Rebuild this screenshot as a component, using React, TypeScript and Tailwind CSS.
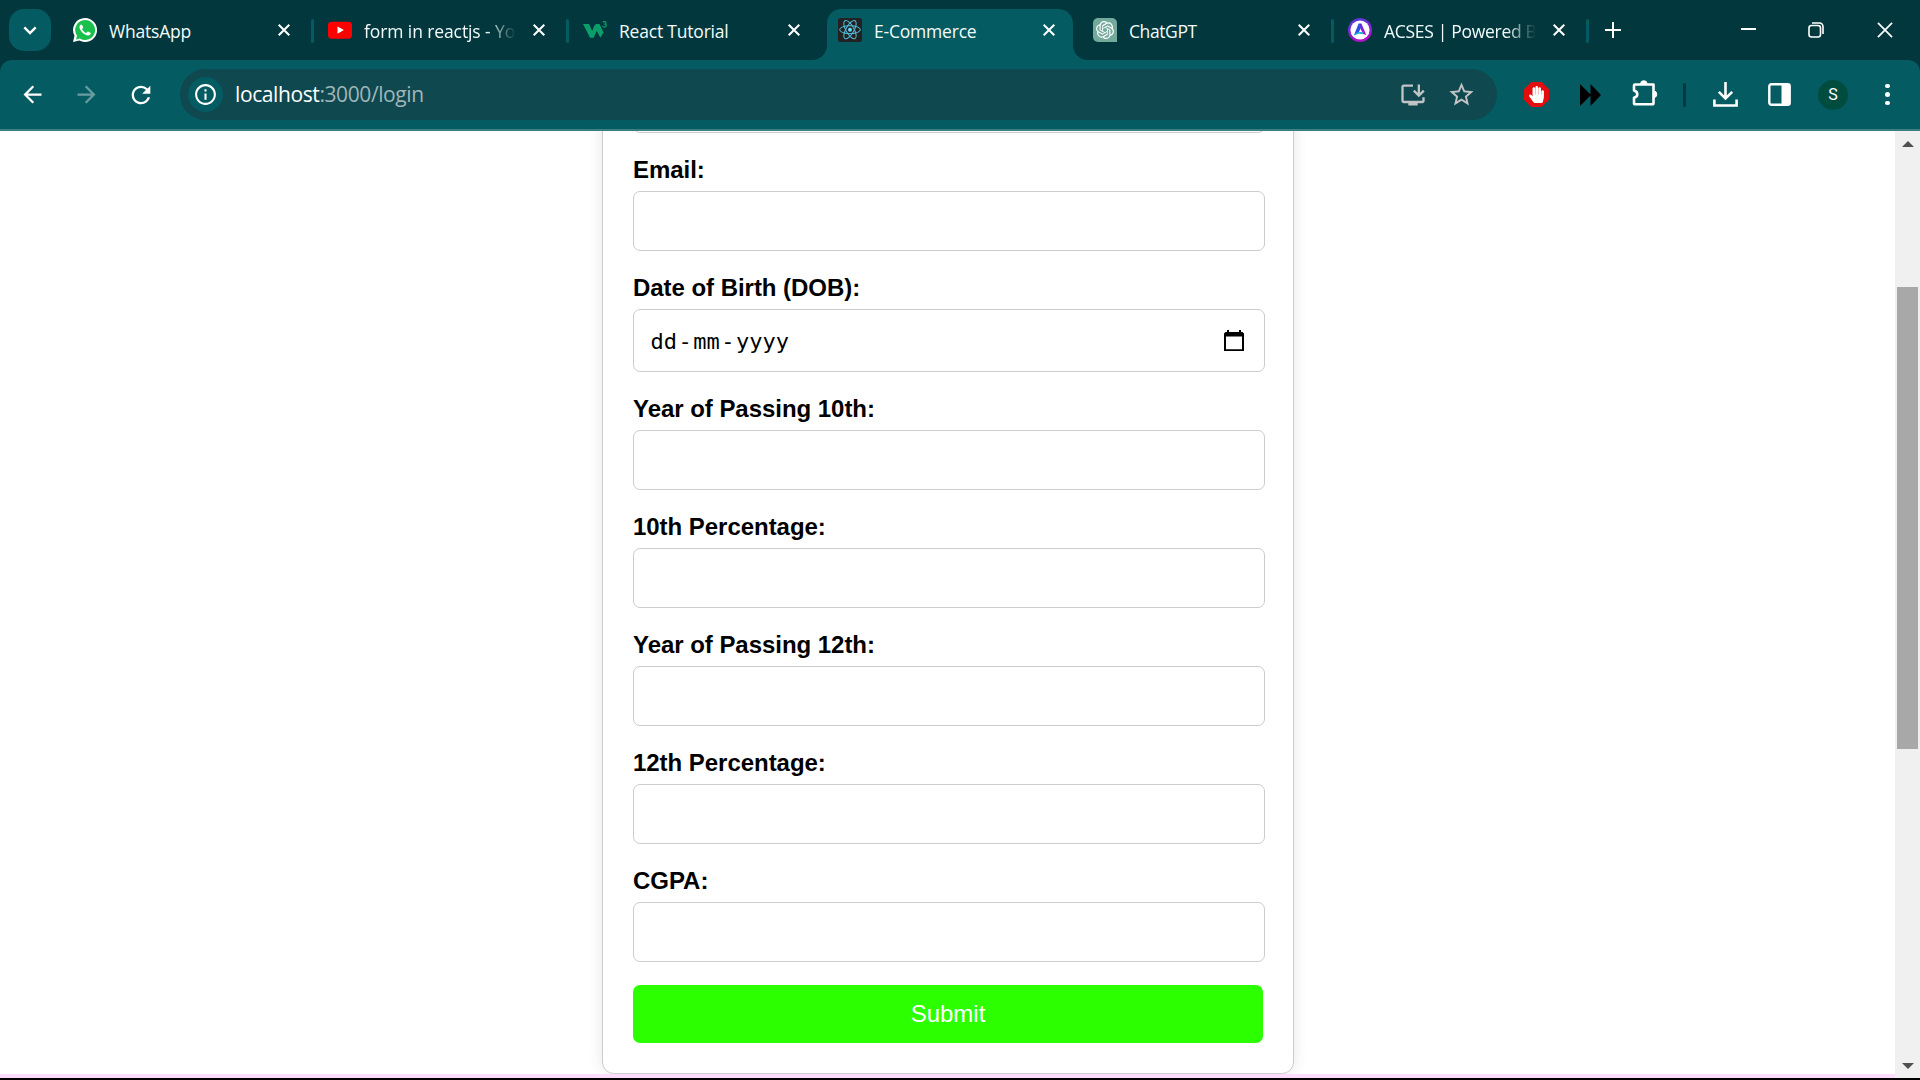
import React from "react";
import {
  MdArrowBack,
  MdArrowForward,
  MdRefresh,
  MdOutlineInfo,
  MdOutlineInstallDesktop,
  MdStarBorder,
} from "react-icons/md";
import { SiOpenai } from "react-icons/si";
import { FaHandPaper } from "react-icons/fa";

function WhatsAppIcon() {
  return (
    <svg width="24" height="24" viewBox="0 0 24 24">
      <path d="M12 0a12 12 0 1 1-5.600 22.600L0 24l1.500-6.200A12 12 0 0 1 12 0z" fill="#fff" />
      <path d="M12 2a10 10 0 1 1-5.200 18.500L3 21.400l1-3.700A10 10 0 0 1 12 2z" fill="#19c14c" />
      <path
        d="M8.300 6.500c-.9 0-1.800 1.200-1.800 2.600 0 3.800 5 8.400 8.600 8.400 1.400 0 2.700-1 2.700-2.400 0-.5-2.300-1.700-2.900-1.700-.6 0-1.100 1.500-1.700 1.500-.9 0-4-2.800-4-3.700 0-.5 1-1 1-1.600 0-.5-.9-3.100-1.900-3.100z"
        fill="#fff"
      />
    </svg>
  );
}

function YouTubeIcon() {
  return (
    <svg width="24" height="24" viewBox="0 0 24 24">
      <rect x="0" y="3.700" width="24" height="17" rx="3.600" fill="#f00" />
      <path d="M9.500 8.400l6.400 3.700-6.400 3.700z" fill="#fff" />
    </svg>
  );
}

function W3Icon() {
  return (
    <svg width="24" height="24" viewBox="0 0 24 24" fill="none">
      <path d="M0 6h6l3.200 7L11.400 7.500 13.200 6h3.300l4 8.500-3.200 5.200-3.600-6.900-3 6.900H7z" fill="#0a9e6b" />
      <path
        d="M19.800 4.500c.6-1.300 3.300-1.100 3.200.4 0 1-.9 1.200-1.700 1.200 1 0 2 .4 2 1.500 0 1.900-3.100 1.900-3.700.4"
        stroke="#0a9e6b"
        strokeWidth="1.200"
      />
    </svg>
  );
}

function ReactIcon() {
  return (
    <svg width="24" height="24" viewBox="0 0 24 24" fill="none">
      <rect width="24" height="24" rx="2.500" fill="#222" />
      <g stroke="#53c1de" strokeWidth="1">
        <ellipse cx="12" cy="11.700" rx="10.300" ry="4" />
        <ellipse cx="12" cy="11.700" rx="10.300" ry="4" transform="rotate(60 12 11.700)" />
        <ellipse cx="12" cy="11.700" rx="10.300" ry="4" transform="rotate(120 12 11.700)" />
      </g>
      <circle cx="12" cy="11.700" r="2" fill="#61dafb" />
    </svg>
  );
}

function ChatGptIcon() {
  return (
    <span className="flex size-6 items-center justify-center rounded-[5px] rounded-br-none bg-[#74aa9c]">
      <SiOpenai size={18} color="#fff" />
    </span>
  );
}

function AcsesIcon() {
  return (
    <svg width="24" height="24" viewBox="0 0 24 24">
      <defs>
        <linearGradient id="ring" x1="0" y1="0" x2="0.300" y2="1">
          <stop offset="0" stopColor="#4a3fd8" />
          <stop offset="1" stopColor="#b012c8" />
        </linearGradient>
        <linearGradient id="leg" x1="0" y1="0" x2="0" y2="1">
          <stop offset="0" stopColor="#5a2be0" />
          <stop offset="1" stopColor="#c010d0" />
        </linearGradient>
      </defs>
      <circle cx="12" cy="12" r="12" fill="url(#ring)" />
      <circle cx="12" cy="12" r="9.600" fill="#fff" />
      <path d="M10.600 5.500h2.800L18.300 17l-3.300-1L12 9.500z" fill="url(#leg)" />
      <path d="M10.600 5.500l2.200 4.500-2.300 5-4.500 2.200z" fill="#2a50e0" />
      <path d="M6 17.300c1.500-2.800 5.500-4 8.500-3l1 2c-3.500-1-6-.6-9.500 1z" fill="#12b8d0" />
    </svg>
  );
}

function CloseGlyph({ size = 12, width = 2 }: { size?: number; width?: number }) {
  return (
    <svg width={size} height={size} viewBox="0 0 12 12" stroke="#fff" strokeWidth={width} fill="none">
      <path d="M.7.7l10.600 10.600M11.300.7L.7 11.300" />
    </svg>
  );
}

type TabInfo = {
  title: string;
  icon: React.ReactNode;
  sep?: boolean;
  active?: boolean;
  fade?: boolean;
  tracking: string;
};

const tabs: TabInfo[] = [
  { title: "WhatsApp", icon: <WhatsAppIcon />, tracking: "tracking-[-0.2px]" },
  { title: "form in reactjs - Yo", icon: <YouTubeIcon />, sep: true, fade: true, tracking: "tracking-[-0.1px]" },
  { title: "React Tutorial", icon: <W3Icon />, sep: true, tracking: "tracking-[-0.2px]" },
  { title: "E-Commerce", icon: <ReactIcon />, active: true, tracking: "tracking-[-0.2px]" },
  { title: "ChatGPT", icon: <ChatGptIcon />, tracking: "tracking-[-0.4px]" },
  { title: "ACSES | Powered B", icon: <AcsesIcon />, sep: true, fade: true, tracking: "tracking-[-0.3px]" },
];

function Tab({ title, icon, sep, active, fade, tracking }: TabInfo) {
  return (
    <div className="relative isolate flex h-[60px] w-[255px] items-center">
      {active && (
        <svg className="absolute top-[9px] left-[-9px] -z-10" width="276" height="51" viewBox="0 0 276 51">
          <path
            d="M0 51C9 51 15 44 15 36V15C15 6 21 0 30 0H246C255 0 261 6 261 15V36C261 44 267 51 276 51Z"
            fill="#045b62"
          />
        </svg>
      )}
      <span className={`mt-0.5 h-6 w-[3px] rounded-full ${sep ? "bg-[#045b62]" : ""}`} />
      <span className="ml-[14px] size-6">{icon}</span>
      <span
        className={`mt-0.5 ml-3 w-[151px] text-[17.5px] leading-6 whitespace-nowrap text-[#f2fbfb] ${tracking} ${
          fade ? "[mask-image:linear-gradient(to_right,#000_122px,transparent_152px)]" : ""
        }`}
      >
        {title}
      </span>
      <span className="ml-[18px]">
        <CloseGlyph />
      </span>
    </div>
  );
}

function TabStrip() {
  return (
    <div className="flex h-[60px] items-center bg-[#02383d]">
      <button className="ml-[9px] flex h-[42px] w-[42px] items-center justify-center rounded-[15px] bg-[#045b62]">
        <svg width="14" height="9" viewBox="0 0 14 9" fill="none" stroke="#fff" strokeWidth="2.400">
          <path d="M1.300 1.300L7 7l5.700-5.700" />
        </svg>
      </button>
      <div className="ml-[5px] flex">
        {tabs.map((t) => (
          <Tab key={t.title} {...t} />
        ))}
      </div>
      <span className="mt-0.5 h-6 w-[3px] rounded-full bg-[#045b62]" />
      <svg className="ml-4" width="16" height="16" viewBox="0 0 16 16" stroke="#fff" strokeWidth="2">
        <path d="M8 0v16M0 8h16" />
      </svg>
      <span className="-mt-0.5 ml-[120px] h-0.5 w-[15px] bg-white" />
      <svg className="ml-[52px]" width="16" height="16" viewBox="0 0 16 16" fill="none" stroke="#fff" strokeWidth="1.600">
        <rect x="1" y="3.500" width="11.500" height="11.500" rx="2.500" />
        <path d="M4 1h7.500a3.500 3.500 0 0 1 3.500 3.500V12" />
      </svg>
      <span className="ml-[53px]">
        <CloseGlyph size={16} width={1.3} />
      </span>
    </div>
  );
}

function Toolbar() {
  return (
    <div className="bg-[#02383d]">
      <div className="flex h-[71px] items-center rounded-t-xl border-b-2 border-[#3a7f84] bg-[#045b62] text-white">
        <MdArrowBack size={27} className="ml-[19px]" />
        <MdArrowForward size={27} className="ml-[27px] opacity-40" />
        <MdRefresh size={28} className="ml-[27px]" />
        <div className="ml-[25px] flex h-[51px] w-[1317px] items-center rounded-full bg-[#0f484f]">
          <span className="ml-2 flex size-[35px] items-center justify-center rounded-full bg-[#045b62]">
            <MdOutlineInfo size={25} />
          </span>
          <span className="ml-3 text-[21px] tracking-[-0.4px] whitespace-nowrap">
            localhost<span className="text-[#9fb6b9]">:3000/login</span>
          </span>
          <span className="ml-auto flex items-center text-[#c1c4c5]">
            <MdOutlineInstallDesktop size={28} />
            <MdStarBorder size={29} className="mr-[21px] ml-5" />
          </span>
        </div>
        <span className="relative ml-[27px] flex size-[25px] items-center justify-center">
          <svg className="absolute inset-0" width="25" height="25" viewBox="0 0 25 25">
            <path d="M7.300 0h10.400L25 7.300v10.400L17.700 25H7.300L0 17.700V7.300z" fill="#e40d0d" />
          </svg>
          <FaHandPaper size={17} className="relative" />
        </span>
        <svg className="ml-[31px]" width="21" height="24" viewBox="0 0 21 24">
          <path d="M0 1l10.500 10.500V1L21 12 10.500 23V12.500L0 23z" fill="#000" />
        </svg>
        <svg className="-mt-[3px] ml-[31px]" width="26" height="26" viewBox="0 0 26 26">
          <path
            d="M3 4.500h18.500V23q0 1.300-1.300 1.300H3.300Q2 24.300 2 23v-5.200q3.300-1 3.300-3.600T2 10.600V5.500q0-1 1-1z"
            fill="none"
            stroke="#fff"
            strokeWidth="2.600"
            strokeLinejoin="round"
          />
          <path d="M8.500 4a3.300 3.300 0 0 1 6.600 0zM21.500 11a3.300 3.300 0 0 1 0 6.600z" fill="#fff" stroke="#fff" />
        </svg>
        <span className="ml-[25px] h-6 w-[3px] rounded-full bg-[#02383d]" />
        <svg className="ml-[27px]" width="25" height="25" viewBox="0 0 25 25" fill="none" stroke="#fff" strokeWidth="2.600">
          <path d="M12.500 0v16M5.800 9.800l6.700 6.700 6.700-6.700M1.400 17.500v6h22.200v-6" />
        </svg>
        <svg className="ml-[30px]" width="23" height="23" viewBox="0 0 23 23">
          <rect x="1.300" y="1.300" width="20.400" height="20.400" rx="2" fill="none" stroke="#fff" strokeWidth="2.400" />
          <path d="M13.500 1h8v21h-8z" fill="#fff" />
        </svg>
        <span className="ml-[27px] flex size-[30px] items-center justify-center rounded-full bg-[#004d40] font-[Roboto] text-[16px] leading-none">
          S
        </span>
        <span className="ml-[37px] flex flex-col gap-1">
          <span className="size-[4.500px] rounded-full bg-white" />
          <span className="size-[4.500px] rounded-full bg-white" />
          <span className="size-[4.500px] rounded-full bg-white" />
        </span>
      </div>
    </div>
  );
}

function Field({ label, children }: { label: string; children?: React.ReactNode }) {
  return (
    <div className="flex flex-col">
      <label className="mt-[22px] mb-[7px] text-[24px] leading-[29px] font-bold tracking-[-0.04px]">{label}</label>
      {children ?? <input className="h-[60px] w-[632px] rounded-[7px] border border-[#ccc] px-4 text-2xl outline-none" />}
    </div>
  );
}

function DateInput() {
  return (
    <div className="flex h-[63px] w-[632px] items-center rounded-[7px] border border-[#ccc] pr-5 pl-[15px]">
      <span className="mt-0.5 flex font-['DejaVu_Sans_Mono'] text-[22px]">
        <span className="px-[1.500px]">dd</span>-<span className="px-[1.500px]">mm</span>-
        <span className="px-[1.500px]">yyyy</span>
      </span>
      <svg className="ml-auto" width="20" height="21" viewBox="0 0 20 21">
        <path d="M1.500 2H3V0h2v2h10V0h2v2h1.500L20 3.500V21H0V3.500zM2 6.500V19.200h16V6.500z" fill="#000" fillRule="evenodd" />
      </svg>
    </div>
  );
}

function Page() {
  return (
    <div className="flex h-[947px]">
      <div className="flex h-[943px] flex-1 flex-col items-center overflow-hidden bg-white">
        <form className="-mt-5 mr-[-1px] flex w-[692px] shrink-0 flex-col rounded-b-xl border border-[#ccc] bg-white pb-[30px] pl-[30px] font-['Liberation_Sans'] text-black shadow-[0_0_15px_rgba(0,0,0,0.100)]">
          <div className="h-[21px] w-[632px] rounded-b-[7px] border-x border-b border-[#ccc]" />
          <Field label="Email:" />
          <Field label="Date of Birth (DOB):">
            <DateInput />
          </Field>
          <Field label="Year of Passing 10th:" />
          <Field label="10th Percentage:" />
          <Field label="Year of Passing 12th:" />
          <Field label="12th Percentage:" />
          <Field label="CGPA:" />
          <button type="button" className="mt-[23px] h-[58px] w-[630px] rounded-[7px] bg-[#2bff00] text-[24px] text-white">
            Submit
          </button>
        </form>
      </div>
      <div className="flex w-[25px] flex-col items-center bg-[#f0f0f0]">
        <svg className="mt-[10px]" width="12" height="6" viewBox="0 0 12 6">
          <path d="M0 6l6-6 6 6z" fill="#505050" />
        </svg>
        <div className="mt-[140px] h-[462px] w-[21px] bg-[#a8a8a8]" />
        <svg className="mt-auto mb-[9px]" width="12" height="6" viewBox="0 0 12 6">
          <path d="M0 0l6 6 6-6z" fill="#505050" />
        </svg>
      </div>
    </div>
  );
}

export default function App() {
  return (
    <div className="flex h-[1080px] w-[1920px] flex-col overflow-hidden bg-[#fddcfd] font-['Open_Sans',sans-serif]">
      <TabStrip />
      <Toolbar />
      <Page />
      <div className="h-0.5 bg-black" />
    </div>
  );
}
